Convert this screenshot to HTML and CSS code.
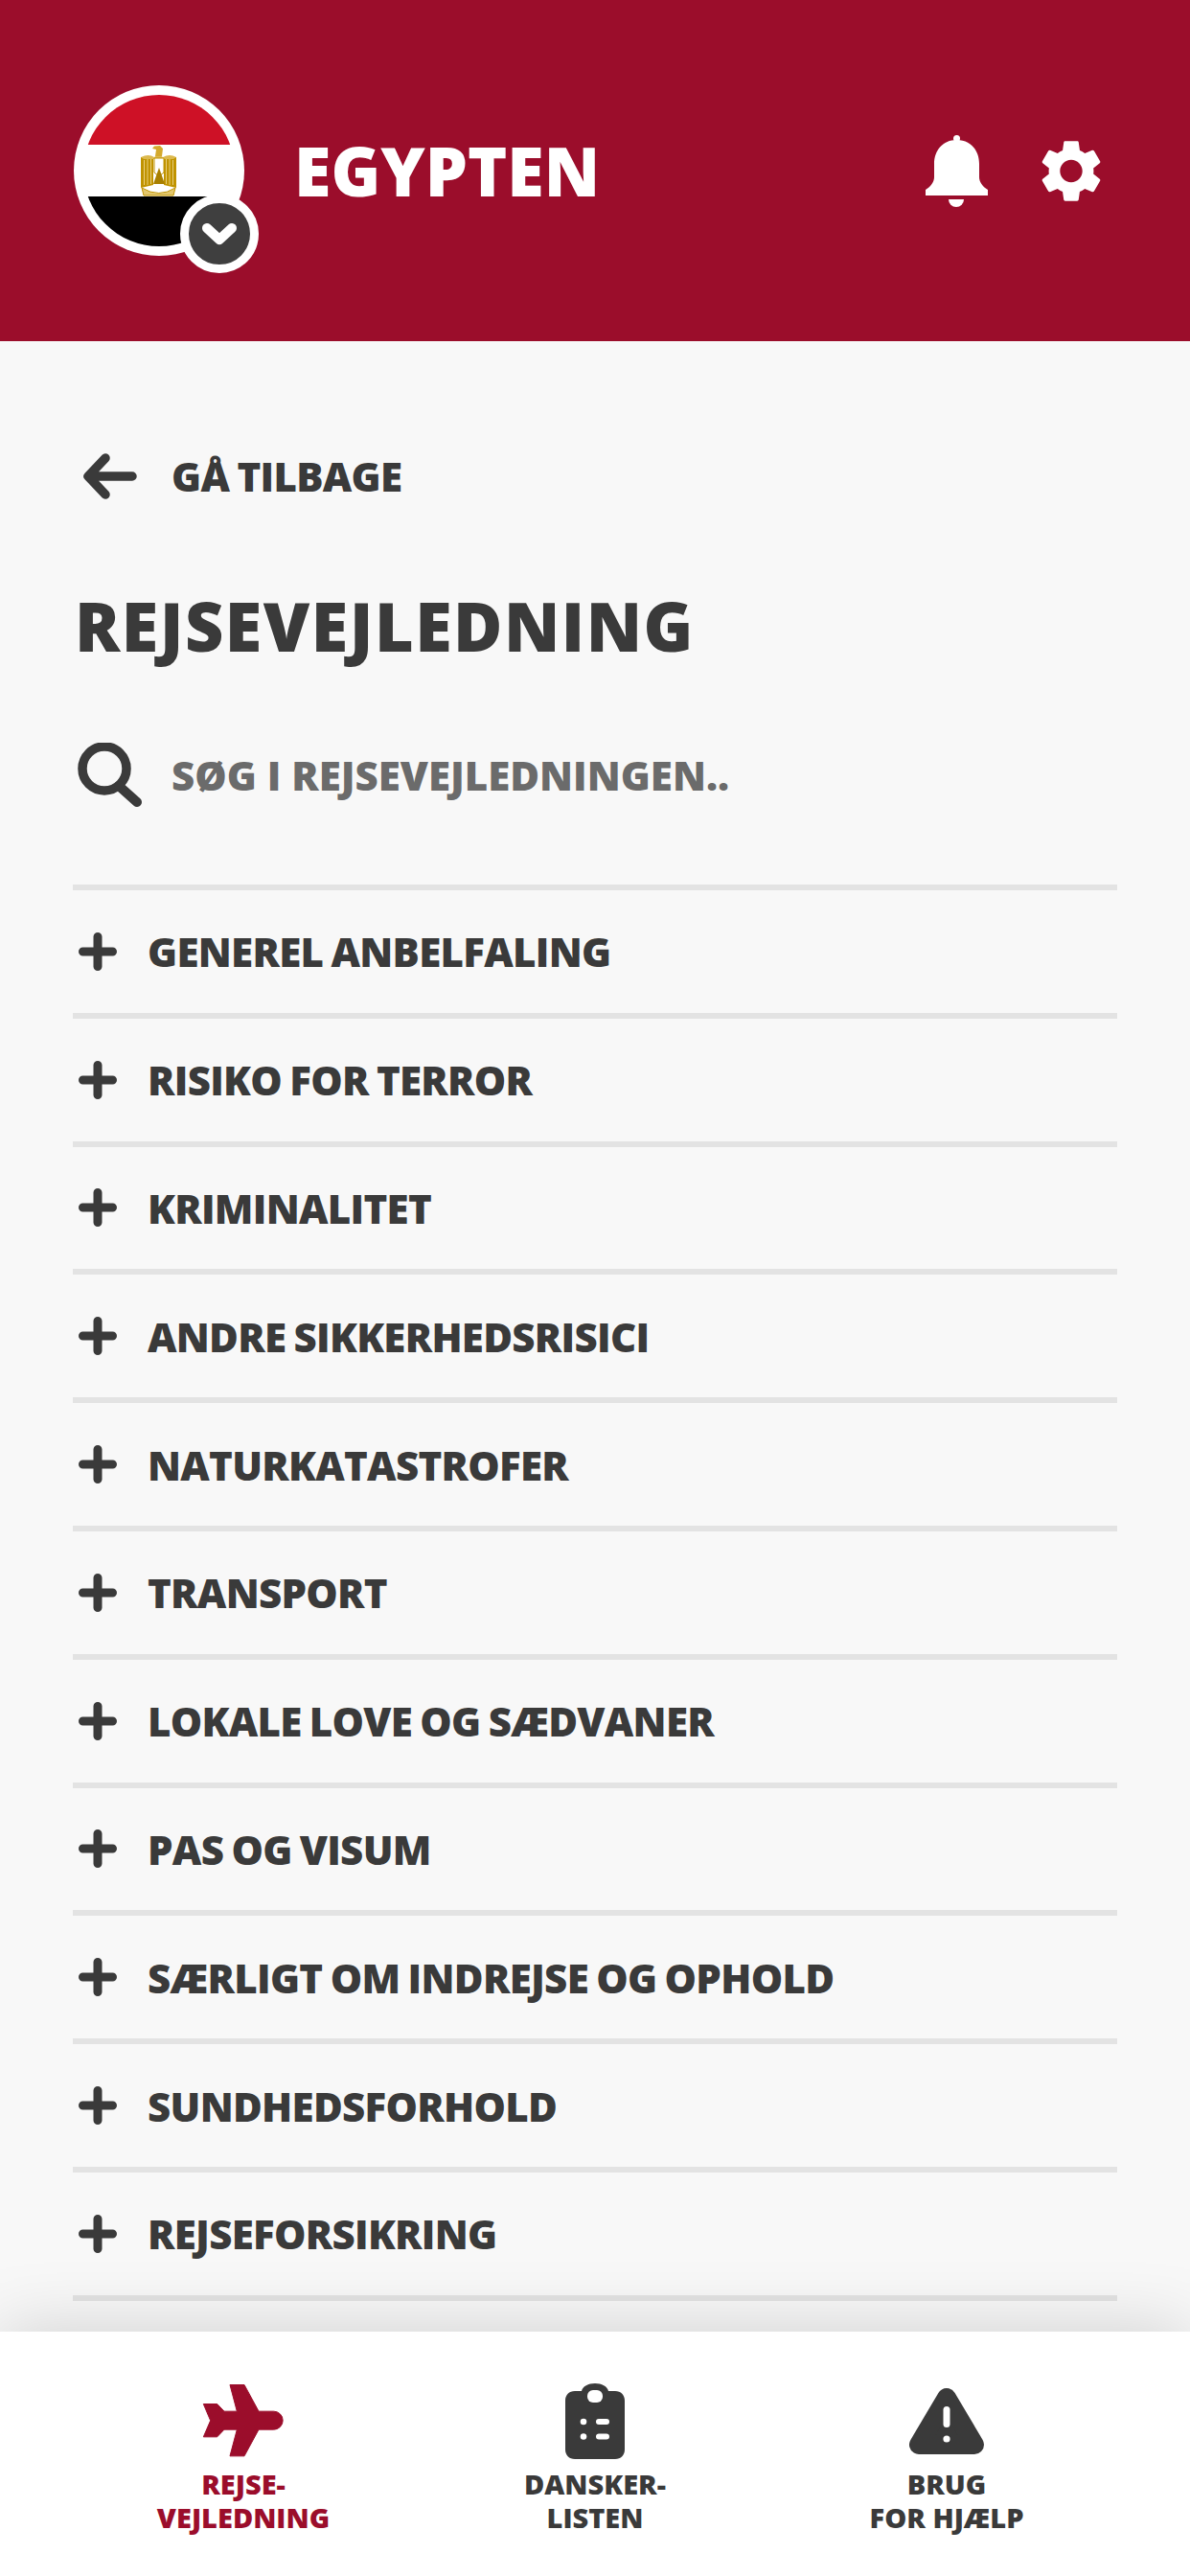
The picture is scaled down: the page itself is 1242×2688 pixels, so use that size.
FILE: index.html
```html
<!DOCTYPE html>
<html lang="da">
<head>
  <meta charset="UTF-8">
  <meta name="viewport" content="width=device-width, initial-scale=1.0">
  <title>Egypten - Rejsevejledning</title>
  <link rel="stylesheet" href="styles.css">
</head>
<body>
  <div class="app">
    <!-- Header with country -->
    <header class="header">
      <div class="avatar">
        <svg class="flag" viewBox="0 0 178 178" width="178" height="178">
          <circle cx="89" cy="89" r="89" fill="#fff"/>
          <clipPath id="flagClip"><circle cx="89" cy="89" r="79"/></clipPath>
          <g clip-path="url(#flagClip)">
            <rect x="0" y="0" width="178" height="62" fill="#ce1126"/>
            <rect x="0" y="116" width="178" height="62" fill="#000"/>
          </g>
          <!-- emblem -->
          <path d="M70 75 L83 76 V104 L70 107 Z M107 75 L94 76 V104 L107 107 Z" fill="#c09300"/>
          <path d="M73.500 78V104 M77 77V104 M80.500 77V103 M103.500 78V104 M100 77V104 M96.500 77V103" stroke="#e9cf7c" stroke-width="1"/>
          <path d="M70 75 Q78 71 84 75 L88 72 L93 75 Q100 71 107 75 L104 77 H73 Z" fill="#dcb94e"/>
          <path d="M84 63.500 L90 63 L93 66 L92 74 H85 L86 67 L82 66 Z" fill="#d4a92c"/>
          <path d="M84 76 H94 V91 L89 95 L84 91 Z" fill="#fff" stroke="#c09300" stroke-width="1"/>
          <path d="M89 86 L95 103 H83 Z" fill="#a87f00"/>
          <path d="M71 107 Q89 118 106 107 L104 115 H73 Z" fill="#e2c76d" stroke="#c09300" stroke-width="1"/>
        </svg>
        <span class="badge">
          <svg viewBox="0 0 64 64" width="64" height="64"><path d="M19 26 L32 38 L45 26" fill="none" stroke="#fff" stroke-width="10" stroke-linecap="round" stroke-linejoin="round"/></svg>
        </span>
      </div>
      <div class="country">EGYPTEN</div>
      <div class="header-icons">
        <svg viewBox="0 0 65 75" width="65" height="75" fill="#fff">
          <circle cx="32.500" cy="3.500" r="3.500"/>
          <path d="M32.500 5 C18 5 9 16 9 30 V44 C9 49 5 54 0 57 V63 H65 V57 C60 54 56 49 56 44 V30 C56 16 47 5 32.500 5 Z"/>
          <path d="M24 67 H40 A8 8 0 0 1 24 67 Z"/>
        </svg>
        <svg viewBox="2.600 2 18.800 20" width="62" height="65" fill="#fff">
          <path d="M19.140 12.940c.04-.3.06-.61.06-.94 0-.32-.02-.64-.07-.94l2.030-1.580c.18-.14.23-.41.12-.61l-1.920-3.320c-.12-.22-.37-.29-.59-.22l-2.390.96c-.5-.38-1.030-.7-1.620-.94l-.36-2.540c-.04-.24-.24-.41-.48-.41h-3.840c-.24 0-.43.17-.47.41l-.36 2.540c-.59.24-1.130.57-1.620.94l-2.390-.96c-.22-.08-.47 0-.59.22L2.740 8.870c-.12.21-.08.47.12.61l2.030 1.580c-.05.3-.09.63-.09.94s.02.64.07.94l-2.030 1.580c-.18.14-.23.41-.12.61l1.920 3.320c.12.22.37.29.59.22l2.390-.96c.5.38 1.030.7 1.620.94l.36 2.540c.05.24.24.41.48.41h3.840c.24 0 .44-.17.47-.41l.36-2.540c.59-.24 1.130-.56 1.620-.94l2.390.96c.22.08.47 0 .59-.22l1.920-3.320c.12-.22.07-.47-.12-.61l-2.010-1.580zM12 15.600c-1.980 0-3.600-1.620-3.600-3.600s1.620-3.600 3.600-3.600 3.600 1.620 3.600 3.600-1.620 3.600-3.600 3.600z"/>
        </svg>
      </div>
    </header>

    <main class="content">
      <div class="back">
        <span class="icon-slot">
          <svg viewBox="0 0 56 48" width="56" height="48"><path d="M5 24 H51 M23 5 L5 24 L23 43" fill="none" stroke="#3a3a3a" stroke-width="9.500" stroke-linecap="round" stroke-linejoin="round"/></svg>
        </span>
        <span class="back-label">GÅ TILBAGE</span>
      </div>

      <h1>REJSEVEJLEDNING</h1>

      <div class="search">
        <span class="icon-slot">
          <svg viewBox="0 0 68 67" width="68" height="67"><circle cx="28" cy="27" r="23" fill="none" stroke="#3a3a3a" stroke-width="9.500"/><path d="M43 45 L62 62" fill="none" stroke="#3a3a3a" stroke-width="10" stroke-linecap="round"/></svg>
        </span>
        <span class="search-label">SØG I REJSEVEJLEDNINGEN..</span>
      </div>

      <!-- Accordion list -->
      <ul class="topics">
        <li><svg class="plus" viewBox="0 0 40 40" width="40" height="40"><path d="M20 4.500V35.500M4.500 20H35.500"/></svg>GENEREL ANBELFALING</li>
        <li><svg class="plus" viewBox="0 0 40 40" width="40" height="40"><path d="M20 4.500V35.500M4.500 20H35.500"/></svg>RISIKO FOR TERROR</li>
        <li><svg class="plus" viewBox="0 0 40 40" width="40" height="40"><path d="M20 4.500V35.500M4.500 20H35.500"/></svg>KRIMINALITET</li>
        <li><svg class="plus" viewBox="0 0 40 40" width="40" height="40"><path d="M20 4.500V35.500M4.500 20H35.500"/></svg>ANDRE SIKKERHEDSRISICI</li>
        <li><svg class="plus" viewBox="0 0 40 40" width="40" height="40"><path d="M20 4.500V35.500M4.500 20H35.500"/></svg>NATURKATASTROFER</li>
        <li><svg class="plus" viewBox="0 0 40 40" width="40" height="40"><path d="M20 4.500V35.500M4.500 20H35.500"/></svg>TRANSPORT</li>
        <li><svg class="plus" viewBox="0 0 40 40" width="40" height="40"><path d="M20 4.500V35.500M4.500 20H35.500"/></svg>LOKALE LOVE OG SÆDVANER</li>
        <li><svg class="plus" viewBox="0 0 40 40" width="40" height="40"><path d="M20 4.500V35.500M4.500 20H35.500"/></svg>PAS OG VISUM</li>
        <li><svg class="plus" viewBox="0 0 40 40" width="40" height="40"><path d="M20 4.500V35.500M4.500 20H35.500"/></svg>SÆRLIGT OM INDREJSE OG OPHOLD</li>
        <li><svg class="plus" viewBox="0 0 40 40" width="40" height="40"><path d="M20 4.500V35.500M4.500 20H35.500"/></svg>SUNDHEDSFORHOLD</li>
        <li><svg class="plus" viewBox="0 0 40 40" width="40" height="40"><path d="M20 4.500V35.500M4.500 20H35.500"/></svg>REJSEFORSIKRING</li>
      </ul>
    </main>

    <!-- Bottom navigation -->
    <nav class="tabbar">
      <a class="tab active">
        <span class="tab-icon">
          <svg viewBox="150 75 270 245" width="90" height="82"><path d="M160 145 H203 L225 168 H265 L243 85 H288 L333 168 H380 A28.500 28.500 0 0 1 380 225 H333 L288 308 H243 L265 225 H225 L203 248 H160 L182 197 Z" fill="#9b0d2b" stroke="#9b0d2b" stroke-width="3" stroke-linejoin="round"/></svg>
        </span>
        <span>REJSE-<br>VEJLEDNING</span>
      </a>
      <a class="tab">
        <span class="tab-icon">
          <svg viewBox="0 0 62 79" width="62" height="79">
            <path d="M10 8 H17 C18 3 24 0 31 0 C38 0 44 3 45 8 H52 C58 8 62 12 62 18 V69 C62 75 58 79 52 79 H10 C4 79 0 75 0 69 V18 C0 12 4 8 10 8 Z" fill="#3a3a3a"/>
            <rect x="23" y="7" width="16" height="13" rx="6" fill="#fff"/>
            <circle cx="19" cy="40" r="3.300" fill="#fff"/>
            <circle cx="19" cy="55.500" r="3.300" fill="#fff"/>
            <rect x="32" y="37" width="14" height="6" rx="3" fill="#fff"/>
            <rect x="32" y="52.500" width="14" height="6" rx="3" fill="#fff"/>
          </svg>
        </span>
        <span>DANSKER-<br>LISTEN</span>
      </a>
      <a class="tab">
        <span class="tab-icon">
          <svg viewBox="0 0 78 71" width="78" height="71">
            <path d="M39 11 L10 60 H68 Z" fill="#3a3a3a" stroke="#3a3a3a" stroke-width="20" stroke-linejoin="round"/>
            <rect x="35.500" y="20" width="7" height="22" rx="3.500" fill="#fff"/>
            <circle cx="39" cy="54" r="3.600" fill="#fff"/>
          </svg>
        </span>
        <span>BRUG<br>FOR HJÆLP</span>
      </a>
    </nav>
  </div>
</body>
</html>
```

FILE: styles.css
```css
/* General page */
html, body {
  margin: 0;
  padding: 0;
}

body {
  font-family: 'Open Sans', 'Noto Sans', sans-serif;
  font-weight: 800;
  color: #3a3a3a;
  background-color: #f8f8f8;
}

.app {
  width: 1242px;
  height: 2688px;
  display: flex;
  flex-direction: column;
  overflow: hidden;
}

/* Header */
.header {
  height: 356px;
  flex: none;
  display: flex;
  align-items: center;
  padding: 0 93px 0 77px;
  background-color: #9b0d2b;
}

.avatar {
  position: relative;
  width: 178px;
  height: 178px;
  flex: none;
}

.flag {
  display: block;
}

.badge {
  position: absolute;
  left: 111px;
  top: 114px;
  width: 64px;
  height: 64px;
  border: 9.5px solid #fff;
  border-radius: 50%;
  background-color: #3f3f3f;
}

.badge svg {
  display: block;
}

.country {
  margin-left: 52px;
  font-size: 70px;
  line-height: 70px;
  color: #fff;
}

.header-icons {
  margin-left: auto;
  display: flex;
  align-items: center;
  gap: 56px;
}

/* Main content */
.content {
  flex: 1;
  padding: 117px 76px 0;
  min-height: 0;
}

.back,
.search {
  display: flex;
  align-items: center;
}

.icon-slot {
  flex: none;
  display: flex;
}

.back .icon-slot {
  padding-left: 11px;
  width: 92px;
}

.search .icon-slot {
  padding-left: 5px;
  width: 98px;
}

.back-label,
.search-label {
  font-size: 42px;
  line-height: 48px;
}

.back-label {
  letter-spacing: -0.7px;
  word-spacing: -2px;
}

.search-label {
  color: #6b6b6b;
}

h1 {
  margin: 97px 0 0;
  padding-left: 2px;
  font-size: 70px;
  line-height: 70px;
  font-weight: 800;
  letter-spacing: 1.5px;
}

.search {
  margin-top: 87px;
}

/* Topic rows */
.topics {
  list-style: none;
  margin: 81px 0 0;
  padding: 0;
  border-bottom: 6px solid #e3e3e3;
}

.topics li {
  box-sizing: border-box;
  height: 133.8px;
  border-top: 6px solid #e3e3e3;
  display: flex;
  align-items: center;
  gap: 32px;
  padding-left: 6px;
  font-size: 42px;
  letter-spacing: -0.7px;
  word-spacing: -2px;
}

.plus {
  flex: none;
  fill: none;
  stroke: #3a3a3a;
  stroke-width: 9;
  stroke-linecap: round;
}

/* Bottom bar */
.tabbar {
  position: relative;
  height: 255px;
  flex: none;
  box-sizing: border-box;
  display: grid;
  grid-template-columns: 368px 366px 368px;
  padding: 52px 0 0 70px;
  background-color: #fff;
  box-shadow: 0 0 70px rgba(0, 0, 0, 0.17);
}

.tab {
  display: flex;
  flex-direction: column;
  align-items: center;
  text-align: center;
  font-size: 29px;
  line-height: 35px;
}

.tab.active {
  color: #9b0d2b;
}

.tab-icon {
  height: 82px;
  margin-bottom: 7px;
  display: flex;
  align-items: center;
}
```
